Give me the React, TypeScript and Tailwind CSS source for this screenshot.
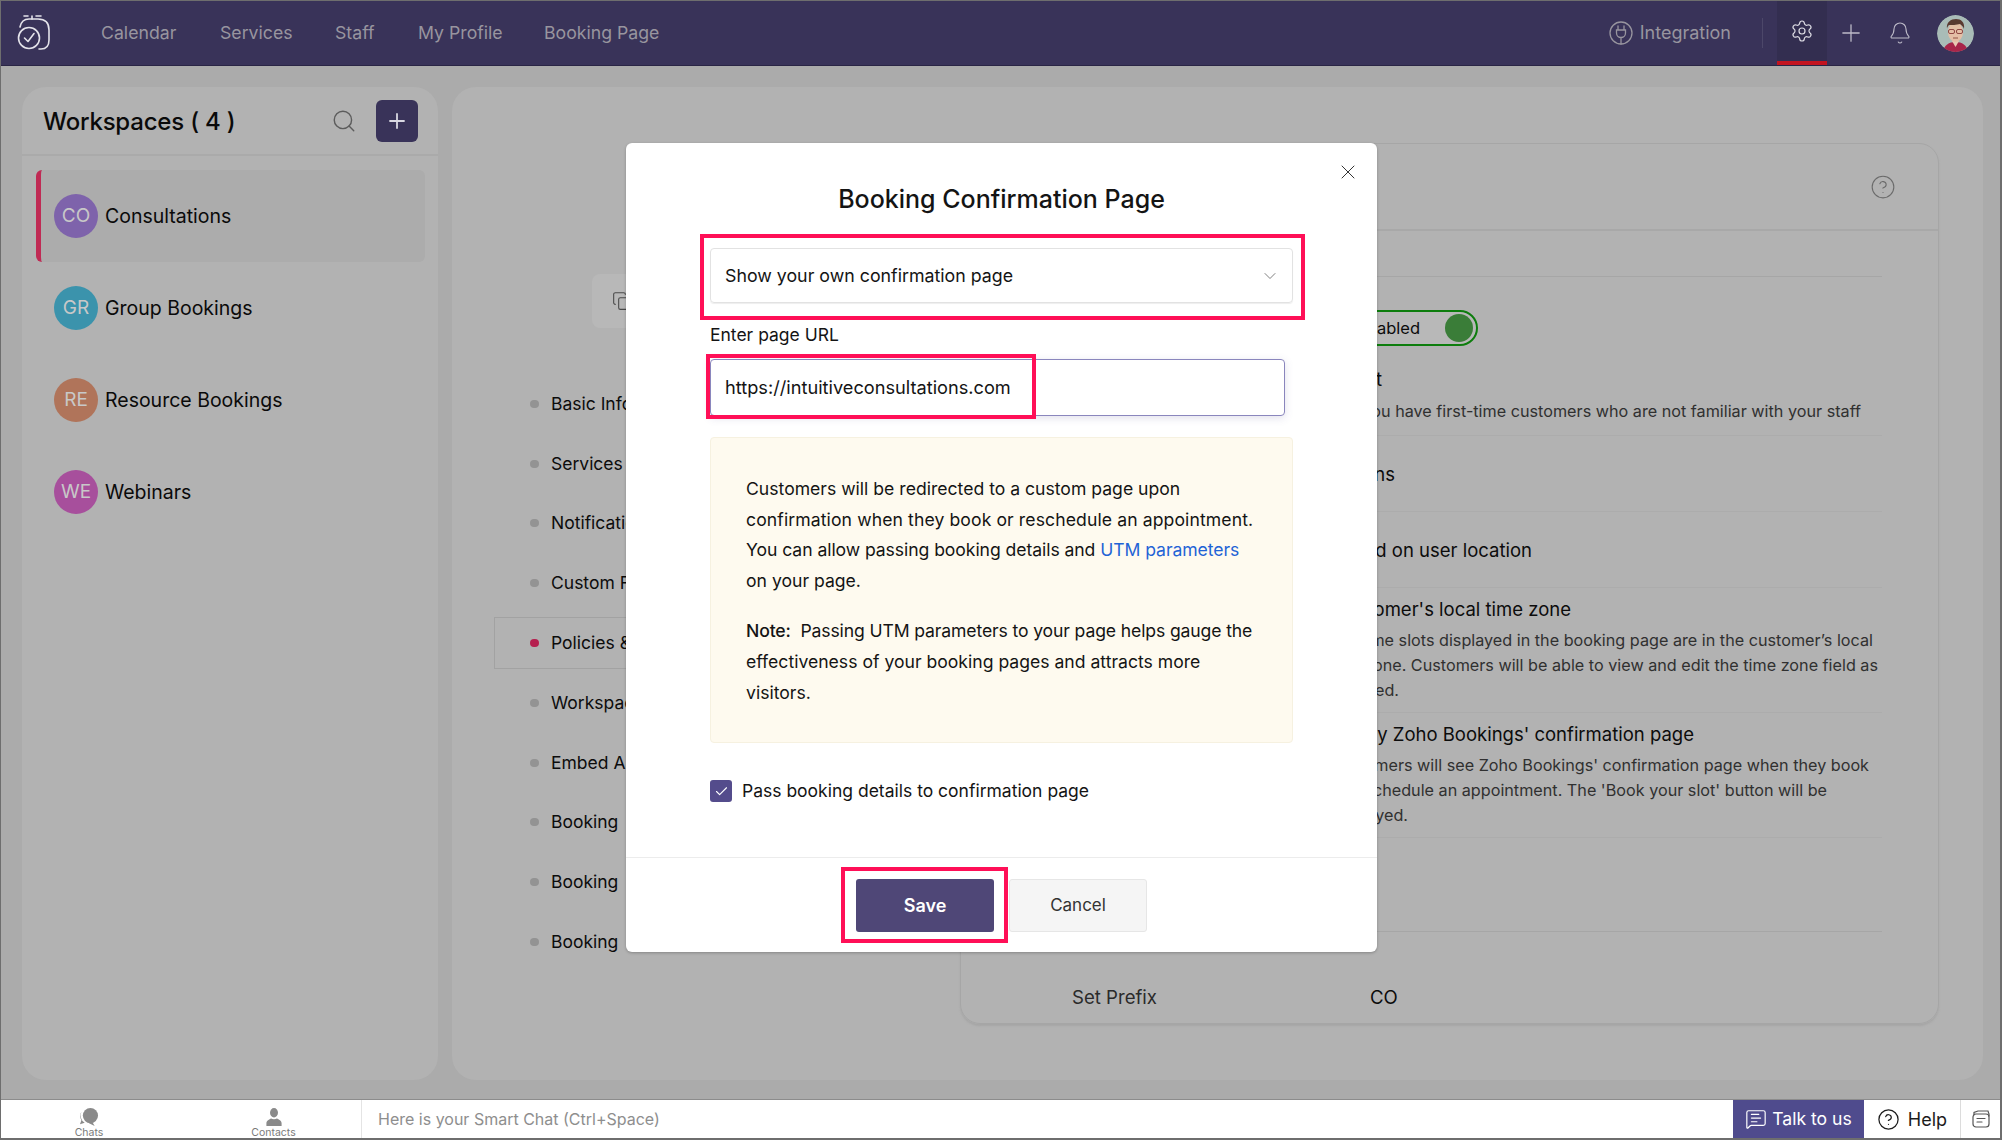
import { Settings, Plus, Bell, Search, X, ChevronDown, Check, CircleHelp, MessageSquareText, Copy } from "lucide-react";

const font = { fontFamily: "Inter, 'Noto Sans', sans-serif" };

function Logo() {
  return (
    <svg width="36" height="38" viewBox="0 0 36 38" fill="none" stroke="#e4e3ea" strokeWidth="1.6" strokeLinecap="round" strokeLinejoin="round">
      <circle cx="13" cy="24" r="10.5" />
      <path d="M8.5 24l3.5 3.5 6-8" />
      <path d="M4 13c1-5 4-8 9-8h9c7 0 11 4 11 11v10c0 6-3 9-8 9h-2" />
      <path d="M8 2h4M20 2h5M16 2v3" />
    </svg>
  );
}

function PlugIcon() {
  return (
    <svg width="24" height="26" viewBox="0 0 24 26" fill="none" stroke="#98959f" strokeWidth="1.3" strokeLinecap="round">
      <circle cx="12" cy="13" r="11" />
      <path d="M9 6v4M15 6v4M7.5 10h9v3a4.5 4.5 0 0 1-9 0v-3zM12 17.5V24" />
    </svg>
  );
}

function Face() {
  return (
    <svg width="37" height="37" viewBox="0 0 37 37">
      <circle cx="18.5" cy="18.5" r="18.5" fill="#a9bcb7" />
      <path d="M6 37c1-7 6-10 12.500-10S30 30 31 37z" fill="#a8264a" />
      <path d="M15 26h7l-3.500 6z" fill="#e9c9b3" />
      <ellipse cx="18.500" cy="17" rx="7.500" ry="10" fill="#e5bfa6" />
      <path d="M10 14c-1-7 4-10 9-10s9 3 8 10c-1-3-3-4-4-5-3 1-9 1-11 1-1 1-2 2-2 4z" fill="#5a3a30" />
      <rect x="11.500" y="14.500" width="6" height="4" rx="1.500" fill="none" stroke="#7a2b2b" strokeWidth="0.8" />
      <rect x="19.500" y="14.500" width="6" height="4" rx="1.500" fill="none" stroke="#7a2b2b" strokeWidth="0.8" />
      <path d="M16 23h5" stroke="#8a4b3b" strokeWidth="0.9" />
    </svg>
  );
}

function ChatsIcon() {
  return (
    <svg width="22" height="19" viewBox="0 0 22 20" fill="#8a8a8a">
      <circle cx="12.500" cy="8" r="8" />
      <path d="M14 14l3 5-6-3z" />
      <path d="M3 4a9 9 0 0 0 0 9l-1.500 4 5-1.500a9 9 0 0 1-3.500-11.500z" />
    </svg>
  );
}

function ContactsIcon() {
  return (
    <svg width="18" height="19" viewBox="0 0 18 20" fill="#8a8a8a">
      <ellipse cx="9" cy="5" rx="4.200" ry="5" />
      <path d="M1 19v-3c0-3 3-4 5-5 1.500 1 4.500 1 6 0 2 1 5 2 5 5v3z" />
    </svg>
  );
}

function NotesIcon() {
  return (
    <svg width="20" height="20" viewBox="0 0 20 20" fill="none" stroke="#555" strokeWidth="1.2" strokeLinecap="round">
      <path d="M3 6V3.500l4-1.500h10l1 3v2" />
      <rect x="2" y="5" width="16" height="13" rx="3" />
      <path d="M6 9.500h8M6 13h5" />
    </svg>
  );
}

const nav = ["Calendar", "Services", "Staff", "My Profile", "Booking Page"];
const navX = ["w-[119px]", "w-[115px]", "w-[83px]", "w-[126px]", "w-[130px]"];

const spaces = [
  { code: "CO", name: "Consultations", color: "bg-[#7e63ab]", active: true },
  { code: "GR", name: "Group Bookings", color: "bg-[#3b93ac]", active: false },
  { code: "RE", name: "Resource Bookings", color: "bg-[#b0745a]", active: false },
  { code: "WE", name: "Webinars", color: "bg-[#a74f9c]", active: false },
];

const sections = [
  "Basic Information",
  "Services",
  "Notifications",
  "Custom Fields",
  "Policies & Rules",
  "Workspace Roles",
  "Embed Apps",
  "Booking\u00a0\u00a0Page",
  "Booking\u00a0\u00a0Form",
  "Booking\u00a0\u00a0Rules",
];

function Tail({ w, cls, children }: { w: string; cls: string; children: React.ReactNode }) {
  return <div className={`${w} ${cls} text-right whitespace-nowrap`}>{children}</div>;
}

const title = "h-[26px] leading-[26px] text-[18.5px] text-[#0c0c0c]";
const desc = "h-[25px] leading-[25px] text-[16.2px] text-[#303030]";

export default function App() {
  return (
    <div style={font} className="relative w-[2002px] h-[1140px] flex flex-col overflow-hidden bg-[#ababab] border-l border-t border-r-2 border-b-2 border-[#6e6e6e]">
      {/* top bar */}
      <header className="h-[65px] shrink-0 bg-[#393359] flex items-center border-b border-[#2a2545]">
        <div className="w-[100px] pl-[15px] shrink-0 flex items-center"><Logo /></div>
        {nav.map((n, i) => (
          <div key={n} className={`${navX[i]} shrink-0 text-[17.7px] text-[#98959f] leading-none`}>{n}</div>
        ))}
        <div className="ml-auto flex items-center h-full">
          <PlugIcon />
          <span className="ml-[7px] mb-[2px] text-[18px] text-[#98959f]">Integration</span>
          <div className="ml-[31px] w-px h-[30px] bg-[#4c4769]" />
          <div className="ml-[14px] w-[50px] h-full flex items-center justify-center bg-[#332e50] border-b-[4px] border-[#c3131f]">
            <Settings size={24} strokeWidth={1.2} color="#dcdbe3" />
          </div>
          <div className="w-[48px] flex justify-center"><Plus size={28} strokeWidth={1.1} color="#bdbbc8" /></div>
          <div className="w-[49px] flex justify-center"><Bell size={24} strokeWidth={1.1} color="#bdbbc8" /></div>
          <div className="ml-[13px] mr-[26px] w-[37px] h-[37px] rounded-full overflow-hidden"><Face /></div>
        </div>
      </header>

      {/* content */}
      <main className="flex-1 min-h-0 flex pl-[21px] pr-[17px] pt-[21px] pb-[19px] gap-[14px]">
        <aside className="w-[416px] shrink-0 rounded-[24px] bg-[#b2b2b2]">
          <div className="h-[69px] flex items-center pl-[21px] pr-[20px] border-b-2 border-[#aaaaaa]">
            <span className="mt-[2px] text-[24px] tracking-[-0.2px] font-medium text-[#0a0a0a]">Workspaces ( 4 )</span>
            <Search size={26} strokeWidth={1.3} color="#5c5c5c" className="ml-auto" />
            <div className="ml-[19px] w-[42px] h-[42px] rounded-[6px] bg-[#393359] flex items-center justify-center">
              <Plus size={24} strokeWidth={1.8} color="#d9d8e2" />
            </div>
          </div>
          <div className="pl-[14px] pt-[14px]">
            {spaces.map((s) => (
              <div key={s.code} className={`w-[389px] h-[92px] flex items-center gap-[7px] rounded-[6px] ${s.active ? "bg-[#acacac] border-l-[5px] border-[#c02a54] pl-[13px]" : "pl-[18px]"}`}>
                <div className={`w-[44px] h-[44px] rounded-full ${s.color} flex items-center justify-center text-[19px] text-[#c8c8c8]`}>{s.code}</div>
                <span className="mt-[1px] text-[19.500px] text-[#0a0a0a]">{s.name}</span>
              </div>
            ))}
          </div>
        </aside>

        <section className="flex-1 min-w-0 rounded-[24px] bg-[#b2b2b2] flex pl-[42px] pt-[56px]">
          <div className="w-[466px] shrink-0">
            <div className="mt-[131px] ml-[98px] w-[200px] h-[54px] rounded-[8px] bg-[#b8b8b8] flex items-center pl-[20px]">
              <Copy size={20} strokeWidth={1.3} color="#4a4a4a" />
            </div>
            <div className="mt-[46px]">
              {sections.map((s, i) => (
                <div key={s} className="h-[59.800px] flex items-center">
                  <div className={`w-[400px] h-[52px] flex items-center gap-[12px] ${i === 4 ? "border border-[#a2a2a2] pl-[35px]" : "pl-[36px]"}`}>
                    <span className={`w-[9px] h-[8px] rounded-full ${i === 4 ? "bg-[#b5204f]" : "bg-[#939393]"}`} />
                    <span className="text-[17.500px] text-[#0c0c0c]">{s}</span>
                  </div>
                </div>
              ))}
            </div>
          </div>

          <div className="w-[979px] h-[881px] rounded-[20px] border border-[#a6a6a6] shadow-[0_2px_2px_#a6a6a6]">
            <div className="h-[87px] border-b-2 border-[#a8a8a8] flex justify-end items-center pr-[42px]">
              <CircleHelp size={26} strokeWidth={1} color="#6a6a6a" />
            </div>
            <div className="ml-[110px] w-[811px]">
              <div className="h-[46px] border-b border-[#a6a6a6]" />
              <div className="h-[159px] border-b border-[#acacac] pt-[33px]">
                <div className="ml-[267px] w-[140px] h-[36px] rounded-full border-2 border-[#0d7d0d] bg-[#b8b8b8] flex items-center justify-end pr-[3px] gap-[25px]">
                  <span className="text-[16.500px] text-[#0c0c0c]">Enabled</span>
                  <span className="w-[28px] h-[28px] rounded-full bg-[#3a7d38]" />
                </div>
                <Tail w="w-[311px]" cls={`${title} mt-[20px]`}>Show staff list</Tail>
                <Tail w="w-[790px]" cls={`${desc} mt-[7px]`}>Enable if you have first-time customers who are not familiar with your staff</Tail>
              </div>
              <div className="h-[76px] border-b border-[#acacac] flex items-center">
                <Tail w="w-[324px]" cls={title}>Time zone options</Tail>
              </div>
              <div className="h-[76px] border-b border-[#acacac] flex items-center">
                <Tail w="w-[461px]" cls={title}>Set time zone based on user location</Tail>
              </div>
              <div className="h-[125px] border-b border-[#acacac] pt-[8px]">
                <Tail w="w-[500px]" cls={title}>Display in customer's local time zone</Tail>
                <Tail w="w-[802px]" cls={`${desc} mt-[6px]`}>Ensure that the time slots displayed in the booking page are in the customer’s local</Tail>
                <Tail w="w-[807px]" cls={desc}>time zone. Customers will be able to view and edit the time zone field as</Tail>
                <Tail w="w-[328px]" cls={desc}>needed.</Tail>
              </div>
              <div className="h-[125px] border-b border-[#acacac] pt-[8px]">
                <Tail w="w-[623px]" cls={title}>Show only Zoho Bookings' confirmation page</Tail>
                <Tail w="w-[798px]" cls={`${desc} mt-[6px]`}>Customers will see Zoho Bookings' confirmation page when they book</Tail>
                <Tail w="w-[756px]" cls={desc}>or reschedule an appointment. The 'Book your slot' button will be</Tail>
                <Tail w="w-[337px]" cls={desc}>displayed.</Tail>
              </div>
              <div className="h-[94px] border-b border-[#a6a6a6]" />
              <div className="pt-[52px] h-[80px] pl-[1px] flex text-[18.600px] leading-[26px]">
                <span className="w-[298px] text-[#2a2a2a]">Set Prefix</span>
                <span className="text-[#0c0c0c]">CO</span>
              </div>
            </div>
          </div>
        </section>
      </main>

      {/* bottom bar */}
      <footer className="h-[39px] shrink-0 bg-white flex items-stretch border-t border-[#8c8c8c]">
        <div className="w-[361px] shrink-0 flex flex-col justify-end">
          <div className="flex items-end pl-[73px] gap-[146px] h-full border-r border-[#e4e4e4]">
            <div className="w-[30px] flex flex-col items-center">
              <ChatsIcon />
              <span className="text-[10.500px] leading-[11px] text-[#7a7a7a]">Chats</span>
            </div>
            <div className="w-[47px] flex flex-col items-center">
              <ContactsIcon />
              <span className="text-[10.500px] leading-[11px] text-[#7a7a7a]">Contacts</span>
            </div>
          </div>
        </div>
        <div className="pl-[16px] flex items-center text-[16px] text-[#8e8e8e]">Here is your Smart Chat (Ctrl+Space)</div>
        <div className="ml-auto w-[131px] bg-[#4f4b8d] flex items-center justify-center gap-[5px] text-[17.600px] text-white">
          <MessageSquareText size={22} strokeWidth={1.3} />
          <span>Talk to us</span>
        </div>
        <div className="w-[97px] flex items-center justify-center gap-[8px] text-[18px] text-[#1c1c1c] border-r border-[#dcdcdc]">
          <CircleHelp size={23} strokeWidth={1.3} />
          <span>Help</span>
        </div>
        <div className="w-[39px] shrink-0 flex items-center justify-center"><NotesIcon /></div>
      </footer>

      {/* modal */}
      <div className="absolute left-[625px] top-[142px] w-[751px] h-[809px] bg-white rounded-[6px] flex flex-col shadow-[0_1px_3px_rgba(0,0,0,0.25)]">
        <button className="absolute left-[710px] top-[17px]"><X size={24} strokeWidth={1} color="#333" /></button>
        <h1 className="pt-[40px] h-[72px] text-center text-[25px] leading-[32px] font-medium text-[#141414]">Booking Confirmation Page</h1>
        <div className="px-[84px] pt-[33px]">
          <div className="w-[583px] h-[55px] rounded-[4px] border border-[#e2e2e2] shadow-[0_1px_1px_#eee] flex items-center pl-[14px] pr-[12px] pt-[1px] text-[17.800px] text-[#141414]">
            <span>Show your own confirmation page</span>
            <ChevronDown size={20} strokeWidth={1} color="#666" className="ml-auto" />
          </div>
          <div className="mt-[20px] h-[24px] leading-[24px] text-[17.500px] text-[#141414]">Enter page URL</div>
          <div className="mt-[12px] w-[575px] h-[57px] rounded-[4px] border border-[#8a86bd] shadow-[0_2px_8px_rgba(90,85,150,0.18)] flex items-center pl-[14px] pt-[1px] text-[18.200px] text-[#141414]">https://intuitiveconsultations.com</div>
          <div className="mt-[21px] w-[583px] h-[306px] rounded-[4px] bg-[#fefaef] border border-[#f6f1e0] pl-[35px] pt-[36px] text-[17.600px] leading-[30.600px] text-[#141414]">
            <div className="whitespace-nowrap">Customers will be redirected to a custom page upon</div>
            <div className="whitespace-nowrap tracking-[0.1px]">confirmation when they book or reschedule an appointment.</div>
            <div className="whitespace-nowrap tracking-[-0.07px]">You can allow passing booking details and <span className="text-[#1f63d6]">UTM parameters</span></div>
            <div>on your page.</div>
            <div className="mt-[20px] whitespace-nowrap tracking-[-0.13px]"><span className="font-medium">Note:</span>&nbsp; Passing UTM parameters to your page helps gauge the</div>
            <div className="whitespace-nowrap">effectiveness of your booking pages and attracts more</div>
            <div>visitors.</div>
          </div>
          <div className="mt-[35px] flex items-center gap-[10px] text-[17.500px] text-[#141414]">
            <span className="w-[22px] h-[22px] rounded-[3px] bg-[#544c8c] flex items-center justify-center"><Check size={15} strokeWidth={1.8} color="#fff" /></span>
            <span>Pass booking details to confirmation page</span>
          </div>
        </div>
        <div className="mt-auto h-[95px] border-t border-[#ececec] flex items-center justify-center gap-[15px]">
          <button className="w-[138px] h-[53px] rounded-[3px] bg-[#4f4777] text-white text-[18px] font-semibold">Save</button>
          <button className="w-[138px] h-[53px] rounded-[3px] bg-[#f5f5f5] border border-[#e6e6e6] text-[#333] text-[17px] pt-[1px]">Cancel</button>
        </div>
        <div className="absolute left-[74px] top-[91px] w-[605px] h-[86px] border-[4px] border-[#ff0f57] pointer-events-none" />
        <div className="absolute left-[80px] top-[211px] w-[330px] h-[65px] border-[4px] border-[#ff0f57] pointer-events-none" />
        <div className="absolute left-[215px] top-[724px] w-[167px] h-[76px] border-[4px] border-[#ff0f57] pointer-events-none" />
      </div>
    </div>
  );
}
